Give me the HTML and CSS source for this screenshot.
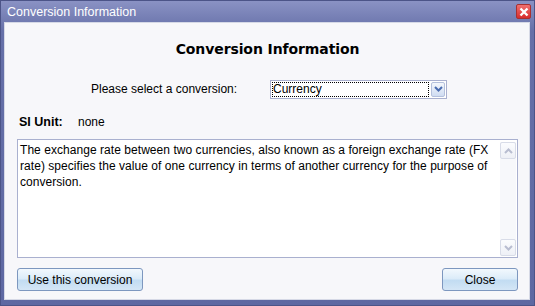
FILE: index.html
```html
<!doctype html>
<html>
<head>
<meta charset="utf-8">
<title>Conversion Information</title>
<link rel="stylesheet" href="styles.css">
</head>
<body>
<div class="win">
	<div class="titlebar">
		<span class="title">Conversion Information</span>
		<span class="closebox"><svg width="10" height="10" viewBox="0 0 10 10"><path d="M1.5 1.5L8.5 8.5M8.5 1.5L1.5 8.5" stroke="#fff" stroke-width="2.4"/></svg></span>
	</div>
	<div class="client">
		<h3 class="head">Conversion Information</h3>
		<div class="pick">
			<span class="lbl">Please select a conversion:</span>
			<div class="combo">
				<span class="val"><span class="focus">Currency</span></span>
				<span class="drop"><svg width="9" height="6" viewBox="0 0 9 6"><path d="M1 1L4.5 4.5L8 1" fill="none" stroke="#4a6cb0" stroke-width="2"/></svg></span>
			</div>
		</div>
		<div class="unit"><b>SI Unit:</b><span>none</span></div>
		<div class="memo">
			<p>The exchange rate between two currencies, also known as a foreign exchange rate (FX rate) specifies the value of one currency in terms of another currency for the purpose of conversion.</p>
			<div class="sbar">
				<span class="arr"><svg width="9" height="6" viewBox="0 0 9 6"><path d="M1 5L4.5 1.5L8 5" fill="none" stroke="#b8bdd0" stroke-width="2"/></svg></span>
				<span class="arr"><svg width="9" height="6" viewBox="0 0 9 6"><path d="M1 1L4.5 4.5L8 1" fill="none" stroke="#b8bdd0" stroke-width="2"/></svg></span>
			</div>
		</div>
		<div class="btns">
			<button class="btn wide">Use this conversion</button>
			<button class="btn">Close</button>
		</div>
	</div>
</div>
</body>
</html>
```
FILE: styles.css
```css
*{ margin:0; padding:0; box-sizing:border-box}
body{ width:535px; height:306px; overflow:hidden; font-family:"Liberation Sans", Arial, sans-serif; font-size:12px; color:#000}

.win{ width:535px; height:306px; background:linear-gradient(#8a92c4, #6670a8 30px, #5e68a2); border:1px solid #4c5488; padding:0 4px 5px 3px; display:flex; flex-direction:column}
.titlebar{ height:21px; display:flex; align-items:center; justify-content:space-between; padding-left:3px}
.title{ font-family:"Liberation Sans", sans-serif; font-size:12.5px; color:#fff}
.closebox{ width:15px; height:15px; margin-right:-1px; background:linear-gradient(#f07070, #d82c2c); border:1px solid #a83030; border-radius:2px; display:flex; align-items:center; justify-content:center}

.client{ flex:1; background:#f7f7fa; border:1px solid #d6d9e6; padding:0 11px 0 12px; display:flex; flex-direction:column}
.head{ text-align:center; font-family:"DejaVu Sans", sans-serif; font-size:14px; font-weight:bold; margin-top:17px; height:18px; line-height:18px; letter-spacing:-0.1px}
.pick{ display:flex; align-items:center; margin-top:22px; padding-left:74px; height:18px}
.lbl{ width:179px}
.combo{ width:177px; height:19px; border:1px solid #a9b0cf; background:#fff; display:flex; align-items:center; padding:1px}
.val{ flex:1; height:15px; display:flex; align-items:center}
.focus{ display:block; width:100%; height:15px; line-height:13px; border:1px dotted #000}
.drop{ width:14px; height:15px; margin-left:2px; background:linear-gradient(#f4f7fc, #cfdcf2); border:1px solid #b4c0dc; border-radius:2px; display:flex; align-items:center; justify-content:center}

.unit{ margin-top:16px; height:16px; line-height:16px; padding-left:2px}
.unit b{ display:inline-block; width:59px; font-size:12.5px}
.memo{ margin-top:9px; height:119px; border:1px solid #a9b0cf; background:#fff; display:flex; padding:2px 1px 1px 1px}
.memo p{ flex:1; padding-left:1px; line-height:16px; letter-spacing:0.05px}
.sbar{ width:17px; display:flex; flex-direction:column; justify-content:space-between; background:#f7f8fb; border-left:1px solid #fff}
.arr{ height:17px; border:1px solid #d8dce8; border-radius:2px; background:linear-gradient(#fbfcfe, #eef0f6); display:flex; align-items:center; justify-content:center}

.btns{ display:flex; justify-content:space-between; margin-top:10px}
.btn{ height:23px; width:76px; font-family:"Liberation Sans", Arial, sans-serif; font-size:12px; color:#000; border:1px solid #7d97bf; border-radius:3px; background:linear-gradient(#f2f8fd, #dcecf9 45%, #c2dcf2 55%, #d4e6f6)}
.btn.wide{ width:126px}
```
